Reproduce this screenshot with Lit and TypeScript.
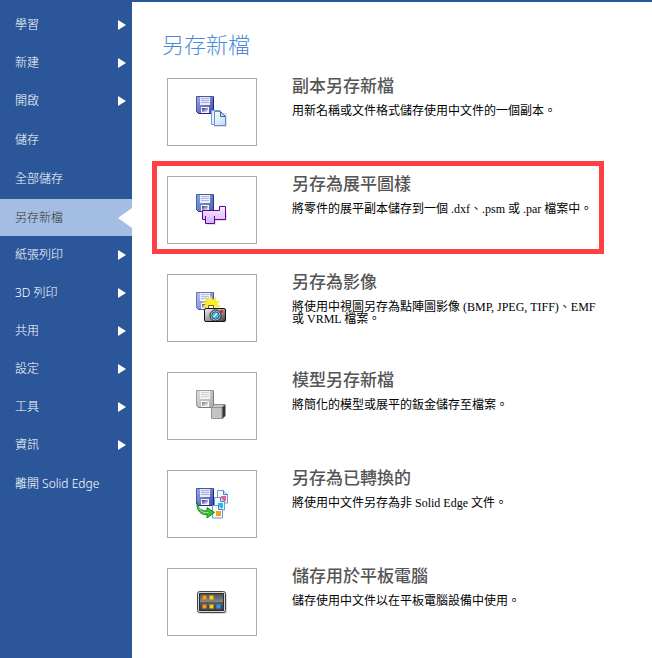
import { LitElement, html, svg, css, nothing, type SVGTemplateResult } from "lit";
import { customElement, property, state } from "lit/decorators.js";
import { classMap } from "lit/directives/class-map.js";

interface MenuItem {
  label: string;
  submenu?: boolean;
}

interface SaveOption {
  title: string;
  text: string;
  icon: string;
  marked?: boolean;
}

const MENU: MenuItem[] = [
  { label: "學習", submenu: true },
  { label: "新建", submenu: true },
  { label: "開啟", submenu: true },
  { label: "儲存" },
  { label: "全部儲存" },
  { label: "另存新檔" },
  { label: "紙張列印", submenu: true },
  { label: "3D 列印", submenu: true },
  { label: "共用", submenu: true },
  { label: "設定", submenu: true },
  { label: "工具", submenu: true },
  { label: "資訊", submenu: true },
  { label: "離開 Solid Edge" },
];

const OPTIONS: SaveOption[] = [
  { title: "副本另存新檔", text: "用新名稱或文件格式儲存使用中文件的一個副本。", icon: "copy" },
  { title: "另存為展平圖樣", text: "將零件的展平副本儲存到一個 .dxf、.psm 或 .par 檔案中。", icon: "flat", marked: true },
  { title: "另存為影像", text: "將使用中視圖另存為點陣圖影像 (BMP, JPEG, TIFF)、EMF 或 VRML 檔案。", icon: "image" },
  { title: "模型另存新檔", text: "將簡化的模型或展平的鈑金儲存至檔案。", icon: "model" },
  { title: "另存為已轉換的", text: "將使用中文件另存為非 Solid Edge 文件。", icon: "convert" },
  { title: "儲存用於平板電腦", text: "儲存使用中文件以在平板電腦設備中使用。", icon: "tablet" },
];

interface DiskColors {
  edge: string;
  dark: string;
  from: string;
  to: string;
  label: string;
}

const BLUE: DiskColors = { edge: "#4a55a8", dark: "#23267c", from: "#9aa8e6", to: "#3d4bb0", label: "#e6e9f6" };
const STEEL: DiskColors = { edge: "#4460a8", dark: "#26386f", from: "#86a4e0", to: "#4561b4", label: "#eef1fa" };
const PALE: DiskColors = { edge: "#6672c0", dark: "#4a53a0", from: "#b9c3f0", to: "#6470c8", label: "#eef0fb" };
const GRAY: DiskColors = { edge: "#9a9a9a", dark: "#7c7c7c", from: "#dcdcdc", to: "#acacac", label: "#f4f4f4" };

const disk = (c: DiskColors) => svg`
  <defs>
    <linearGradient id="disk" x1="0" y1="0" x2="1" y2="1">
      <stop offset="0" stop-color=${c.from}></stop><stop offset="1" stop-color=${c.to}></stop>
    </linearGradient>
    <linearGradient id="slot" x1="0" y1="0" x2="1" y2="1">
      <stop offset="0" stop-color=${c.dark}></stop><stop offset="1" stop-color="#ffffff"></stop>
    </linearGradient>
  </defs>
  <path d="M.5 .5H17.500V17.500H2.500L.5 15.500z" fill="url(#disk)" stroke=${c.edge}></path>
  <path d="M17.500 1V17.500H2.500L.5 15.500" fill="none" stroke=${c.dark}></path>
  <path d="M4 1H14V9H4z" fill=${c.label}></path>
  <path d="M5 2.500H13M5 4.500H13M5 6.500H13" stroke=${c.edge} stroke-opacity=".4"></path>
  <path d="M5 11H13V17H5z" fill="#f4f4fa"></path>
  <path d="M6 12H12V16H6z" fill="url(#slot)"></path>`;

const page = (x: number, y: number, fill: string) => svg`
  <path d="M${x + 0.5} ${y + 0.5}h6l4 4v8.500h-10z" fill="#f4f9ff" stroke="#6c9ccc"></path>
  <path d="M${x + 6.5} ${y + 0.5}v4h4" fill="#cfe2f6" stroke="#4a7cba"></path>
  <path d="M${x + 4} ${y + 6}h5v5h-5z" fill=${fill}></path>`;

const lamp = (x: number, y: number, color: string) => svg`
  <rect x=${x - 2} y=${y - 2} width="5" height="5" rx="1" fill=${color} opacity=".45"></rect>
  <rect x=${x - 1} y=${y - 1} width="3" height="3" fill=${color}></rect>`;

const ICONS: Record<string, () => SVGTemplateResult> = {
  copy: () => svg`
    ${disk(BLUE)}
    <path d="M18 17H31V31H18z" fill="#000" opacity=".12"></path>
    <defs><linearGradient id="sheet" x1="0" y1="0" x2="1" y2="1">
      <stop offset="0" stop-color="#fff"></stop><stop offset="1" stop-color="#b9dcf8"></stop>
    </linearGradient></defs>
    <path d="M15.500 14.500H24V28.500H15.500z" fill="#e4f2fd" stroke="#6f9fd8"></path>
    <path d="M18.500 15.500H24.500L29.500 20.500V29.500H18.500z" fill="url(#sheet)" stroke="#5f8fce"></path>
    <path d="M24.500 15.500V20.500H29.500z" fill="#c6dcf2" stroke="#3a5ea8"></path>`,
  flat: () => svg`
    ${disk(STEEL)}
    <defs><linearGradient id="metal" x1="0" y1="0" x2="0" y2="1">
      <stop offset="0" stop-color="#f6eaff"></stop><stop offset="1" stop-color="#d4b4fa"></stop>
    </linearGradient></defs>
    <path d="M8 18H31V27H20V31H11V27H8z" fill="#000" opacity=".12"></path>
    <path d="M6.500 16.500H23.500V12.500H29.500V25.500H18.500V29.500H9.500V25.500H6.500z" fill="url(#metal)" stroke="#660099"></path>
    <path d="M9.500 22V26M18.500 22V26" stroke="#660099"></path>`,
  image: () => svg`
    ${disk(PALE)}
    <defs><linearGradient id="body" x1="0" y1="0" x2="1" y2="1">
      <stop offset="0" stop-color="#f2f2f2"></stop><stop offset=".5" stop-color="#a0a0a0"></stop><stop offset="1" stop-color="#3c3c3c"></stop>
    </linearGradient></defs>
    <path d="M15 4l1.500 4L20 5.500l-.5 4 4-.5-2.500 3.500 3.500 2.500H6.500L10 12.500 6.500 9.500l4.500.5-1-4.500 3.500 2.500z" fill="#ffee2a" stroke="#f0dc20" stroke-width=".5"></path>
    <path d="M12.500 17V13.500h5V17" fill="#fff" stroke="#6b661c"></path>
    <rect x="8.500" y="16.500" width="21" height="13" rx="1.500" fill="url(#body)" stroke="#111"></rect>
    <circle cx="19.500" cy="23.500" r="5.500" fill="#d5dce0" stroke="#161616"></circle>
    <circle cx="19.500" cy="23.500" r="3.800" fill="#46b4da" stroke="#185878"></circle>
    <path d="M17.500 25L21 21.500" stroke="#d5f6ff" stroke-width="1.500"></path>
    <circle cx="25.500" cy="19.500" r="1.600" fill="#f01818"></circle>`,
  model: () => svg`
    ${disk(GRAY)}
    <path d="M15.500 17.500L18.500 14.500H29L26 17.500z" fill="#c8c8c8" stroke="#8a8a8a"></path>
    <path d="M26 17.500L29.500 14.500V26L26 29z" fill="#383838"></path>
    <path d="M15.500 17.500H26V28.500H15.500z" fill="#c4c4c4" stroke="#949494"></path>`,
  convert: () => svg`
    ${disk(BLUE)}
    ${page(21, 2, "#f25c86")}
    ${page(18, 9, "#22b9e8")}
    ${page(16, 17, "#f5a01e")}
    <path d="M1 14C2 21 6 23 11 23V19.500L18.500 24.500 11 30V26.500C4 27 .5 22 1 14z" fill="#3cbf38" stroke="#178a20"></path>
    <path d="M2.500 19C5 24 8 25 12.500 24.500" fill="none" stroke="#a6ec8c"></path>`,
  tablet: () => svg`
    <defs>
      <linearGradient id="screen" x1="0" y1="0" x2="0" y2="1">
        <stop offset="0" stop-color="#4c4c4c"></stop><stop offset=".5" stop-color="#8a8a8a"></stop>
        <stop offset=".52" stop-color="#5c5c5c"></stop><stop offset="1" stop-color="#3e3e3e"></stop>
      </linearGradient>
    </defs>
    <rect x="2" y="7" width="29" height="21" rx="2" fill="#000" opacity=".15"></rect>
    <rect x="1.500" y="5.500" width="28" height="21" rx="2" fill="#d4d4d4" stroke="#4a4448"></rect>
    <rect x="3.500" y="7.500" width="24" height="17" fill="url(#screen)" stroke="#2e2e2e"></rect>
    ${lamp(8, 11, "#ff9a10")}${lamp(15, 11, "#ffcc18")}
    ${lamp(8, 20, "#ff9a10")}${lamp(15, 20, "#ffcc18")}${lamp(22, 20, "#20a0f4")}`,
};

@customElement("save-option")
export class SaveOptionCard extends LitElement {
  @property({ attribute: false }) option!: SaveOption;

  static styles = css`
    :host {
      display: block;
    }
    .card {
      display: flex;
      align-items: flex-start;
      gap: 35px;
      width: 100%;
      box-sizing: border-box;
      margin: 0;
      padding: 10px 0 5px 10px;
      border: 5px solid transparent;
      background: none;
      text-align: left;
      color: #000;
      font: 12px/12px "Liberation Serif", "Noto Sans CJK TC", serif;
      cursor: pointer;
    }
    .marked {
      border-color: #fc4044;
    }
    .thumb {
      display: flex;
      flex: none;
      align-items: center;
      justify-content: center;
      width: 90px;
      height: 68px;
      box-sizing: border-box;
      border: 1px solid #ababab;
      background: #fff;
    }
    .icon {
      display: block;
      width: 32px;
      height: 32px;
    }
    .words {
      display: flex;
      flex: 1;
      flex-direction: column;
      gap: 13px;
      min-width: 0;
    }
    .title {
      color: #555;
      font: 500 17px/14px "Noto Sans CJK TC", sans-serif;
    }
  `;

  render() {
    const { title, text, icon, marked } = this.option;
    return html`
      <button class=${classMap({ card: true, marked: !!marked })} type="button">
        <span class="thumb">
          <svg class="icon" viewBox="0 0 32 32" aria-hidden="true">${ICONS[icon]()}</svg>
        </span>
        <span class="words">
          <span class="title">${title}</span>
          <span>${text}</span>
        </span>
      </button>
    `;
  }
}

@customElement("app-root")
export class AppRoot extends LitElement {
  @state() private current = "另存新檔";

  static styles = css`
    :host {
      display: flex;
      min-height: 100vh;
      box-sizing: border-box;
      border-top: 2px solid #2b579a;
      background: #fff;
    }
    .menu {
      flex: none;
      width: 132px;
      box-sizing: border-box;
      padding-top: 4px;
      background: #2b579a;
    }
    .item {
      display: flex;
      align-items: center;
      justify-content: space-between;
      width: 100%;
      height: 39px;
      margin: 0;
      padding: 0 6px 0 15px;
      border: 0;
      background: none;
      color: #fff;
      font: 300 12px/18px "Noto Sans", "Noto Sans CJK TC", sans-serif;
      white-space: nowrap;
      cursor: pointer;
    }
    .submenu {
      height: 38px;
    }
    .current {
      height: 37px;
      margin-top: 1px;
      padding-right: 0;
      background: #a3bde3;
      color: #333;
    }
    .arrow {
      width: 8px;
      height: 10px;
      fill: #fff;
    }
    .pointer {
      width: 14px;
      height: 20px;
      fill: #fff;
    }
    .main {
      flex: 1;
      min-width: 0;
      padding: 29px 48px 0 20px;
    }
    .heading {
      margin: 0 0 8px 10px;
      color: #4a8ad4;
      font: 300 22px/24px "Noto Sans CJK TC", sans-serif;
    }
    .options {
      display: grid;
      gap: 5px;
    }
  `;

  private renderItem(item: MenuItem) {
    const current = item.label === this.current;
    return html`
      <button
        class=${classMap({ item: true, submenu: !!item.submenu, current })}
        type="button"
        aria-current=${current ? "page" : nothing}
        @click=${() => (this.current = item.label)}
      >
        <span>${item.label}</span>
        ${current
          ? html`<svg class="pointer" viewBox="0 0 14 20" aria-hidden="true"><path d="M14 0V20L0 10z"></path></svg>`
          : item.submenu
            ? html`<svg class="arrow" viewBox="0 0 8 10" aria-hidden="true"><path d="M0 0L8 5 0 10z"></path></svg>`
            : nothing}
      </button>
    `;
  }

  render() {
    return html`
      <nav class="menu">${MENU.map((item) => this.renderItem(item))}</nav>
      <main class="main">
        <h1 class="heading">另存新檔</h1>
        <div class="options">
          ${OPTIONS.map((option) => html`<save-option .option=${option}></save-option>`)}
        </div>
      </main>
    `;
  }
}
